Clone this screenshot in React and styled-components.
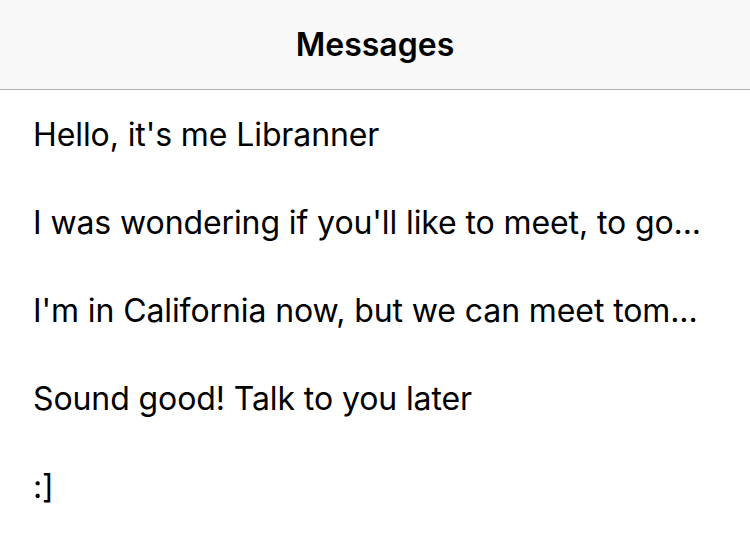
import React from "react";
import styled, { createGlobalStyle } from "styled-components";

const Global = createGlobalStyle`
  html, body {
    margin: 0;
    padding: 0;
    background: #ffffff;
  }
  body {
    font-family: Inter, "Liberation Sans", Arial, sans-serif;
    -webkit-font-smoothing: antialiased;
  }
`;

const Screen = styled.div`
  width: 750px;
  height: 540px;
  background: #ffffff;
  display: flex;
  flex-direction: column;
  overflow: hidden;
`;

const NavBar = styled.header`
  height: 89px;
  flex: 0 0 auto;
  background: #f8f8f8;
  border-bottom: 1px solid #b2b2b2;
  display: flex;
  align-items: center;
  justify-content: center;
`;

const Title = styled.h1`
  margin: 0;
  font-size: 32px;
  font-weight: 600;
  color: #000000;
  letter-spacing: 0;
`;

const List = styled.ul`
  list-style: none;
  margin: 0;
  padding: 0;
  display: flex;
  flex-direction: column;
`;

const Row = styled.li`
  height: 88px;
  display: flex;
  align-items: center;
  padding: 0 33px;
  font-size: 32px;
  letter-spacing: -0.1px;
  color: #000000;
  white-space: nowrap;
  overflow: hidden;
`;

const messages = [
  "Hello, it's me Libranner",
  "I was wondering if you'll like to meet, to go...",
  "I'm in California now, but we can meet tom...",
  "Sound good! Talk to you later",
  ":]",
];

export default function App() {
  return (
    <>
      <Global />
      <Screen>
        <NavBar>
          <Title>Messages</Title>
        </NavBar>
        <List>
          {messages.map((m, i) => (
            <Row key={i}>{m}</Row>
          ))}
        </List>
      </Screen>
    </>
  );
}
